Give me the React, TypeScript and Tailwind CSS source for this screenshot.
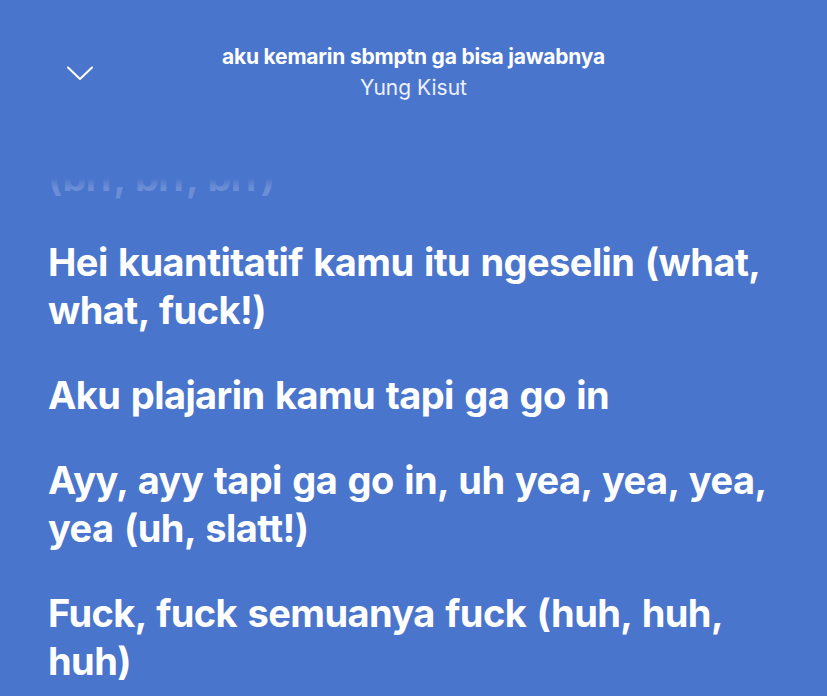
const lyrics = [
  "Hei kuantitatif kamu itu ngeselin (what, what, fuck!)",
  "Aku plajarin kamu tapi ga go in",
  "Ayy, ayy tapi ga go in, uh yea, yea, yea, yea (uh, slatt!)",
  "Fuck, fuck semuanya fuck (huh, huh, huh)",
];

function ChevronIcon() {
  return (
    <svg width="26" height="15" viewBox="0 0 26 15" fill="none">
      <path
        d="M1 1.5 L13 13 L25 1.5"
        stroke="white"
        strokeWidth="2"
        strokeLinecap="round"
        strokeLinejoin="round"
      />
    </svg>
  );
}

export default function App() {
  return (
    <div
      className="w-[827px] h-[696px] overflow-hidden bg-[#4a75cd] text-white flex flex-col"
      style={{ fontFamily: "Inter, 'Noto Sans', sans-serif" }}
    >
      <header className="relative pt-[43px] h-[178px] shrink-0">
        <button className="absolute left-[67px] top-[66px]">
          <ChevronIcon />
        </button>
        <div className="flex flex-col items-center gap-[3px]">
          <h1 className="text-[21px] leading-[28px] font-bold tracking-[-0.01em]">
            aku kemarin sbmptn ga bisa jawabnya
          </h1>
          <p className="text-[21px] leading-[28px] text-white/90">Yung Kisut</p>
        </div>
      </header>

      <div className="relative flex-1 overflow-hidden">
        <div className="-mt-[25px] pl-[48px] pr-[30px] flex flex-col gap-[37px]">
          <p className="text-[38px] leading-[48px] font-bold tracking-[-0.015em] [word-spacing:2px] text-white/20">
            (brr, brr, brr)
          </p>
          {lyrics.map((line) => (
            <p
              key={line}
              className="text-[38px] leading-[48px] font-bold tracking-[-0.015em] [word-spacing:2px]"
            >
              {line}
            </p>
          ))}
        </div>
        <div className="absolute inset-x-0 top-0 h-[10px] bg-gradient-to-b from-[#4a75cd] to-transparent" />
      </div>
    </div>
  );
}
